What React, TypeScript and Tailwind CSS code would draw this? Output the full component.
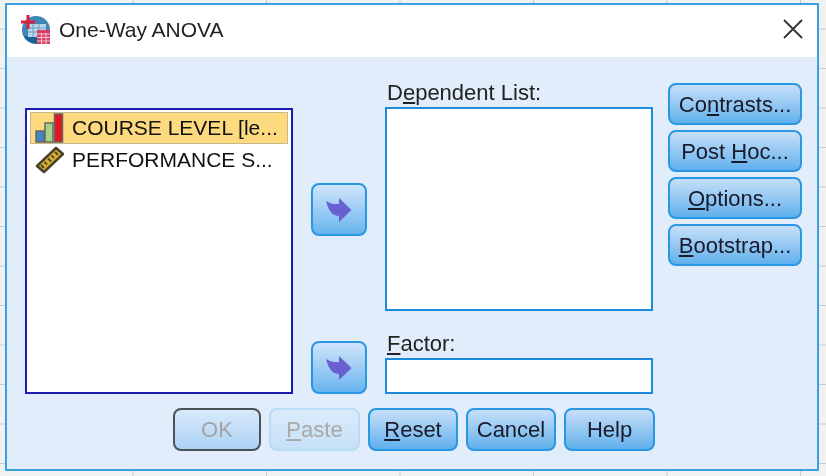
import type { ReactNode } from "react";

function TitleIcon() {
  return (
    <svg width="30" height="30" viewBox="0 0 30 30" className="shrink-0">
      <circle cx="15" cy="15" r="14" fill="#3f86b8" />
      <path d="M3 21a14 14 0 0 0 19 6V21z" fill="#1f5f94" />
      <rect x="7" y="9" width="18" height="13" fill="#b9d3e8" />
      <path d="M7 13h18M7 17h18M12 9v13M18 9v13" stroke="#6fa0c6" strokeWidth="1" />
      <path d="M0 7h14M7 0v14" stroke="#d8203a" strokeWidth="3" />
      <rect x="16" y="15" width="13" height="14" fill="#d93f63" />
      <path d="M16 19h13M16 22.500h13M16 26h13M20.500 18v11M25 18v11" stroke="#f6c4d0" strokeWidth="1" />
    </svg>
  );
}

function BarsIcon() {
  return (
    <svg width="30" height="30" viewBox="0 0 30 30" className="shrink-0">
      <rect x="1" y="18" width="8" height="11" fill="#3f86c8" stroke="#666" strokeWidth="1.500" />
      <rect x="10" y="10" width="8" height="19" fill="#a8d08d" stroke="#666" strokeWidth="1.500" />
      <rect x="19.500" y="1" width="8" height="28" fill="#e3141f" stroke="#666" strokeWidth="1.500" />
    </svg>
  );
}

function RulerIcon() {
  return (
    <svg width="30" height="30" viewBox="0 0 30 30" className="shrink-0">
      <path d="M2 21 21 3l7 6-19 18z" fill="#e0b02a" stroke="#46432f" strokeWidth="2.500" strokeLinejoin="round" />
      <path d="M6 20l3 3M9.500 17l2.500 2.500M13 13.500l3 3M16.500 10.500l2.500 2.500M20 7l3 3" stroke="#46432f" strokeWidth="1.800" />
    </svg>
  );
}

function ArrowButton() {
  return (
    <button className="flex h-[53px] w-[56px] items-center justify-center rounded-[8px] border-2 border-[#2a97e4] bg-gradient-to-b from-[#cfe4f9] to-[#66b4ee]">
      <svg width="26" height="24" viewBox="0 0 26 24">
        <path d="M13 0 25.500 12 13 24v-6C8 18 3 15 0 3l4 2c2 1 5 1 9 1z" fill="#6a5fd0" />
      </svg>
    </button>
  );
}

function Button({
  children,
  width,
  height = "h-[43px]",
  variant = "normal",
}: {
  children: ReactNode;
  width: string;
  height?: string;
  variant?: "normal" | "ok" | "paste";
}) {
  const look =
    variant === "ok"
      ? "border-[#4a5258] from-[#d9eafb] to-[#abd2f3] text-[#a3a3a3]"
      : variant === "paste"
        ? "border-[#b9dcf6] from-[#dcebfb] to-[#c6e0f8] text-[#a9a9a9]"
        : "border-[#2a97e4] from-[#c6dff8] to-[#5fb0ec] text-[#1a1a2a]";
  return (
    <button
      className={`flex ${width} ${height} items-center justify-center whitespace-pre rounded-[8px] border-2 bg-gradient-to-b text-[22px] ${look}`}
    >
      {children}
    </button>
  );
}

export default function App() {
  return (
    <div className="h-[476px] w-[826px] bg-[#f1f1f1] bg-[linear-gradient(90deg,#b9cfe0_1px,transparent_1px),linear-gradient(#b9cfe0_1px,transparent_1px)] bg-[size:133.500px_39.500px] bg-[position:-1px_-11px] pl-[5px] pt-[3px] font-['Liberation_Sans',Arial,sans-serif] blur-[0.5px]">
      <div className="flex h-[468px] w-[814px] flex-col border-2 border-[#3c9fe0] bg-[#e1edfa]">
        <div className="flex h-[52px] shrink-0 items-center justify-between bg-white pb-[2px] pl-[14px] pr-[14px]">
          <div className="flex items-center gap-[8px]">
            <TitleIcon />
            <span className="text-[21px] text-[#222]">One-Way ANOVA</span>
          </div>
          <svg width="20" height="20" viewBox="0 0 20 20" className="mb-[2px]">
            <path d="M1 1l18 18M19 1 1 19" stroke="#333" strokeWidth="1.800" />
          </svg>
        </div>

        <div className="flex pt-[26px]">
          <div className="ml-[18px] pt-[25px]">
            <div className="flex h-[286px] w-[268px] flex-col border-2 border-[#1c1cb4] bg-white px-[3px] pt-[2px] text-[21px] text-[#111]">
              <div className="flex h-[32px] items-center gap-[7px] whitespace-nowrap border border-[#c9b98a] bg-[#fdd97f] pl-[4px]">
                <BarsIcon />
                <span>COURSE LEVEL [le...</span>
              </div>
              <div className="flex h-[32px] items-center gap-[7px] whitespace-nowrap pl-[5px]">
                <RulerIcon />
                <span>PERFORMANCE S...</span>
              </div>
            </div>
          </div>

          <div className="ml-[18px] flex flex-col gap-[105px] pt-[100px]">
            <ArrowButton />
            <ArrowButton />
          </div>

          <div className="ml-[18px] w-[268px] text-[22px] text-[#222]">
            <div className="h-[24px] pl-[2px] leading-[20px]">
              D<u>e</u>pendent List:
            </div>
            <div className="h-[204px] border-2 border-[#1c8bdc] bg-white" />
            <div className="mt-[19px] h-[28px] pl-[2px] leading-[28px]">
              <u>F</u>actor:
            </div>
            <div className="h-[36px] border-2 border-[#1c8bdc] bg-white" />
          </div>

          <div className="ml-[15px] flex flex-col gap-[5px]">
            <Button width="w-[134px]" height="h-[42px]">
              Co<u>n</u>trasts...
            </Button>
            <Button width="w-[134px]" height="h-[42px]">
              Post <u>H</u>oc...
            </Button>
            <Button width="w-[134px]" height="h-[42px]">
              <u>O</u>ptions...
            </Button>
            <Button width="w-[134px]" height="h-[42px]">
              <u>B</u>ootstrap...
            </Button>
          </div>
        </div>

        <div className="ml-[166px] mt-[14px] flex gap-[8px]">
          <Button width="w-[88px]" variant="ok">
            OK
          </Button>
          <Button width="w-[91px]" variant="paste">
            <u>P</u>aste
          </Button>
          <Button width="w-[90px]">
            <u>R</u>eset
          </Button>
          <Button width="w-[90px]">Cancel</Button>
          <Button width="w-[91px]">Help</Button>
        </div>
      </div>
    </div>
  );
}
